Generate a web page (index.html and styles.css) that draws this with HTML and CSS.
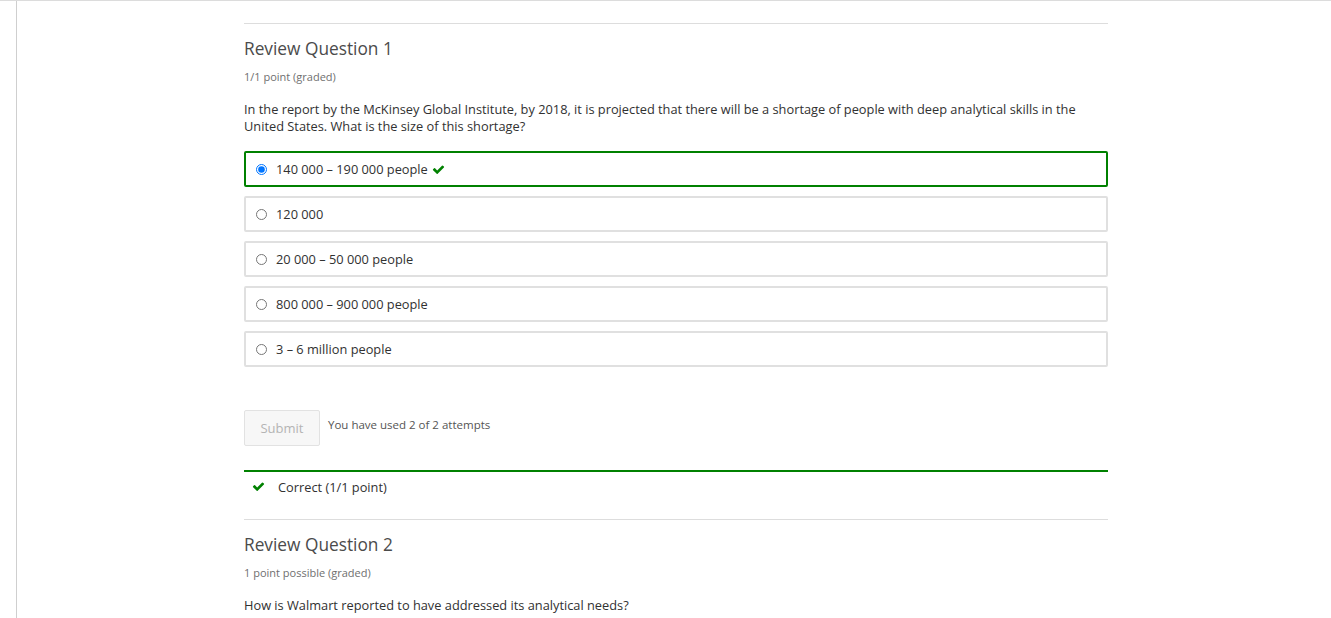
FILE: index.html
```html
<!DOCTYPE html>
<html>
<head>
<meta charset="utf-8">
<link rel="stylesheet" href="styles.css">
</head>
<body>
<div class="page">
  <div class="rail"></div>
  <main class="main">
    <section class="problem">
      <h2 class="title">Review Question 1</h2>
      <div class="points">1/1 point (graded)</div>
      <p class="prompt">In the report by the McKinsey Global Institute, by 2018, it is projected that there will be a shortage of people with deep analytical skills in the United States. What is the size of this shortage?</p>
      <div class="choices">
        <label class="choice correct"><input type="radio" name="q1" checked><span>140 000 – 190 000 people</span>
          <svg class="check" viewBox="0 0 1792 1792"><path d="M1671 566q0 40-28 68l-724 724-136 136q-28 28-68 28t-68-28l-136-136-362-362q-28-28-28-68t28-68l136-136q28-28 68-28t68 28l294 295 656-657q28-28 68-28t68 28l136 136q28 28 28 68z"/></svg>
        </label>
        <label class="choice"><input type="radio" name="q1"><span>120 000</span></label>
        <label class="choice"><input type="radio" name="q1"><span>20 000 – 50 000 people</span></label>
        <label class="choice"><input type="radio" name="q1"><span>800 000 – 900 000 people</span></label>
        <label class="choice"><input type="radio" name="q1"><span>3 – 6 million people</span></label>
      </div>
      <div class="actions">
        <button class="submit" disabled>Submit</button>
        <span class="attempts">You have used 2 of 2 attempts</span>
      </div>
      <div class="feedback">
        <svg class="check" viewBox="0 0 1792 1792"><path d="M1671 566q0 40-28 68l-724 724-136 136q-28 28-68 28t-68-28l-136-136-362-362q-28-28-28-68t28-68l136-136q28-28 68-28t68 28l294 295 656-657q28-28 68-28t68 28l136 136q28 28 28 68z"/></svg>
        <span>Correct (1/1 point)</span>
      </div>
    </section>
    <section class="problem">
      <h2 class="title">Review Question 2</h2>
      <div class="points">1 point possible (graded)</div>
      <p class="prompt">How is Walmart reported to have addressed its analytical needs?</p>
    </section>
  </main>
</div>
</body>
</html>
```
FILE: styles.css
```css
html, body {
  margin: 0;
  padding: 0;
  background: #fff;
  height: 100%;
  overflow: hidden;
}
body {
  font-family: "Open Sans", "Liberation Sans", sans-serif;
  color: #313131;
  border-top: 1px solid #dcdcdc;
  box-sizing: border-box;
}
.page {
  display: flex;
  min-height: 100%;
}
.rail {
  width: 16px;
  flex: 0 0 16px;
  border-right: 1px solid #cfcfcf;
}
.main {
  width: 864px;
  margin-left: 227px;
  padding-top: 22px;
}
.problem {
  border-top: 1px solid #dddddd;
  padding-top: 13px;
}
.title {
  margin: 0;
  font-size: 17.3px;
  font-weight: 400;
  line-height: 24px;
  color: #4b4b4b;
}
.points {
  margin-top: 8px;
  font-size: 11px;
  line-height: 16px;
  color: #6f6f6f;
}
.prompt {
  margin: 16px 0 0;
  font-size: 12.8px;
  line-height: 17px;
  color: #313131;
}
.choices {
  margin-top: 16px;
  display: flex;
  flex-direction: column;
  gap: 9px;
}
.choice {
  display: flex;
  align-items: center;
  height: 36px;
  box-sizing: border-box;
  border: 2px solid #e0e0e0;
  border-radius: 2px;
  padding-left: 10px;
  font-size: 12.8px;
  color: #313131;
}
.choice.correct {
  border-color: #008100;
}
.choice input {
  margin: 0 9px 0 0;
  width: 11px;
  height: 11px;
}
.check {
  width: 13px;
  height: 13px;
  fill: #008100;
}
.choice .check {
  margin-left: 4px;
}
.actions {
  margin-top: 43px;
  display: flex;
  align-items: flex-start;
  gap: 8px;
}
.submit {
  width: 76px;
  height: 36px;
  border: 1px solid #e2e2e2;
  border-radius: 2px;
  background: #f7f7f7;
  color: #b4b4b4;
  font-family: "Open Sans", "Liberation Sans", sans-serif;
  font-size: 13px;
  padding: 0;
}
.attempts {
  font-size: 11.5px;
  line-height: 16px;
  margin-top: 7px;
  color: #555;
}
.feedback {
  margin-top: 24px;
  border-top: 2px solid #008100;
  display: flex;
  align-items: center;
  height: 29px;
  padding-left: 8px;
  padding-bottom: 18px;
  font-size: 12.8px;
  color: #313131;
}
.feedback .check {
  margin-right: 13px;
}
```
